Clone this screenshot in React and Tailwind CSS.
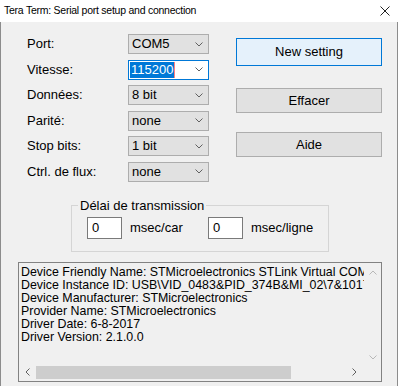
import React from "react";

const Chevron = ({ color = "#606060" }) => (
  <svg width="8" height="5" viewBox="0 0 8 5" className="shrink-0">
    <polyline points="0.5,0.5 4,4 7.5,0.5" fill="none" stroke={color} strokeWidth="1" />
  </svg>
);

const Combo = ({ value, active }) =>
  active ? (
    <div className="h-[20px] w-[81px] flex items-center justify-between bg-white border border-[#0078d7] pl-[1px] pr-[5px]">
      <span className="bg-[#0078d7] text-white leading-[16px] px-[1px] border-r border-[#ff8080]">{value}</span>
      <Chevron />
    </div>
  ) : (
    <div className="h-[20px] w-[81px] flex items-center justify-between bg-[#e1e1e1] border border-[#adadad] pl-[3px] pr-[5px]">
      <span>{value}</span>
      <Chevron />
    </div>
  );

const rows = [
  ["Port:", "COM5"],
  ["Vitesse:", "115200"],
  ["Données:", "8 bit"],
  ["Parité:", "none"],
  ["Stop bits:", "1 bit"],
  ["Ctrl. de flux:", "none"],
];

const info = [
  "Device Friendly Name: STMicroelectronics STLink Virtual COM Port (COM5)",
  "Device Instance ID: USB\\VID_0483&PID_374B&MI_02\\7&1017A2F&0&0002",
  "Device Manufacturer: STMicroelectronics",
  "Provider Name: STMicroelectronics",
  "Driver Date: 6-8-2017",
  "Driver Version: 2.1.0.0",
];

export default function App() {
  return (
    <div className="w-[400px] h-[386px] flex flex-col bg-white text-black overflow-hidden font-['Liberation_Sans',Arial,sans-serif] text-[13px]">
      {/* title bar */}
      <div className="h-[22px] shrink-0 flex items-center justify-between pl-[4px] pr-[10px] bg-white text-[10.5px] tracking-[-0.25px]">
        <span>Tera Term: Serial port setup and connection</span>
        <svg width="10" height="10" viewBox="0 0 10 10">
          <path d="M0.5 0.5 L9.5 9.5 M9.5 0.5 L0.5 9.5" stroke="#222" strokeWidth="1" />
        </svg>
      </div>

      {/* body */}
      <div className="h-[364px] w-[398px] bg-[#f0f0f0] border-l border-r border-[#8c8c8c]">
        <div className="flex pt-[12px]">
          {/* settings */}
          <div className="ml-[26px] flex flex-col gap-[5.5px]">
            {rows.map(([label, value]) => (
              <div key={label} className="flex items-center h-[20px]">
                <span className="w-[101px]">{label}</span>
                <Combo value={value} active={label === "Vitesse:"} />
              </div>
            ))}
          </div>

          {/* buttons */}
          <div className="ml-[27px] w-[146px] flex flex-col pt-[4px]">
            <button className="h-[28px] bg-[#e5f1fb] border border-[#0078d7]">New setting</button>
            <button className="mt-[22px] h-[25px] bg-[#e1e1e1] border border-[#adadad]">Effacer</button>
            <button className="mt-[19px] h-[25px] bg-[#e1e1e1] border border-[#adadad]">Aide</button>
          </div>
        </div>

        {/* transmission delay */}
        <div className="ml-[70px] mt-[16px] w-[258px] h-[54px] flex flex-col">
          <div className="flex items-center h-[15px]">
            <div className="w-[7px] h-[1px] bg-[#d5d5d5]" />
            <span className="px-[2px] leading-[15px]">Délai de transmission</span>
            <div className="flex-1 h-[1px] bg-[#d5d5d5]" />
          </div>
          <div className="flex-1 mt-[-8px] border border-t-0 border-[#d5d5d5] pl-[15px] pt-[12px]">
            <div className="flex items-center">
              <div className="w-[35px] h-[22px] bg-white border border-[#7a7a7a] pl-[4px] leading-[20px]">0</div>
              <span className="ml-[8px] w-[78px]">msec/car</span>
              <div className="w-[35px] h-[22px] bg-white border border-[#7a7a7a] pl-[4px] leading-[20px]">0</div>
              <span className="ml-[8px]">msec/ligne</span>
            </div>
          </div>
        </div>

        {/* device info */}
        <div className="ml-[17px] mt-[10px] w-[364px] h-[120px] border border-[#828282] bg-[#f0f0f0] flex flex-col">
          <div className="h-[101px] flex">
            <div className="w-[345px] overflow-hidden pl-[2px] pt-[3px] text-[12.4px] leading-[13px] whitespace-nowrap">
              {info.map((line) => (
                <div key={line}>{line}</div>
              ))}
            </div>
            <div className="w-[17px] flex flex-col items-center justify-between pt-[7px] pb-[4px]">
              <svg width="8" height="5" viewBox="0 0 8 5">
                <polyline points="0.5,4.5 4,1 7.5,4.5" fill="none" stroke="#b8b8b8" strokeWidth="1" />
              </svg>
              <Chevron color="#b8b8b8" />
            </div>
          </div>
          <div className="h-[17px] flex items-center">
            <div className="w-[17px] flex justify-center">
              <svg width="5" height="8" viewBox="0 0 5 8">
                <polyline points="4.5,0.5 1,4 4.5,7.5" fill="none" stroke="#606060" strokeWidth="1" />
              </svg>
            </div>
            <div className="w-[255px] h-[13px] bg-[#cdcdcd]" />
            <div className="w-[73px] flex justify-end pr-[7px]">
              <svg width="5" height="8" viewBox="0 0 5 8">
                <polyline points="0.5,0.5 4,4 0.5,7.5" fill="none" stroke="#606060" strokeWidth="1" />
              </svg>
            </div>
          </div>
        </div>
      </div>
    </div>
  );
}
